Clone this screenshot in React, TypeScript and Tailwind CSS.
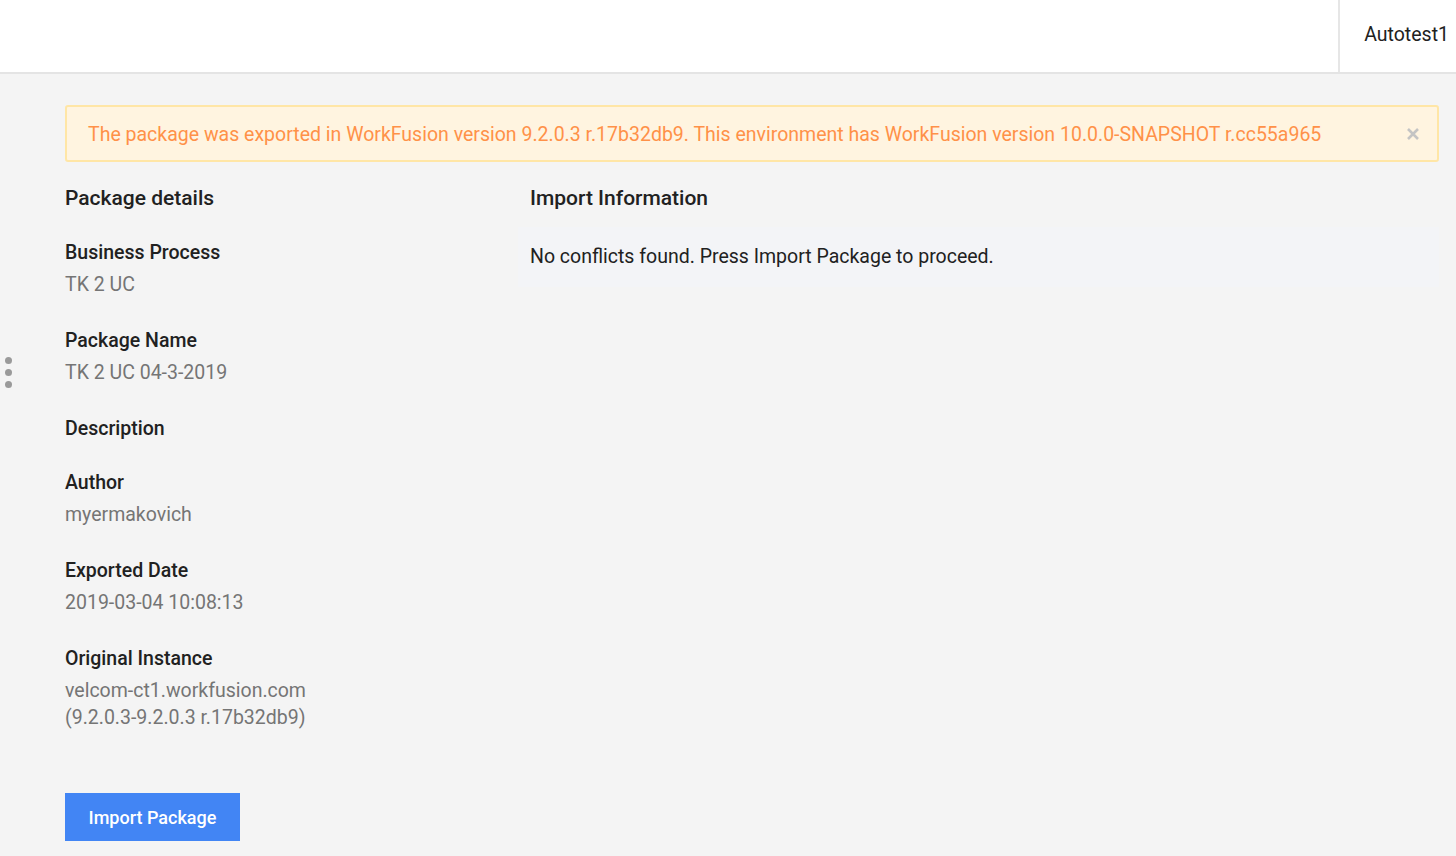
import React from "react";

const font = { fontFamily: "Roboto, 'Noto Sans', sans-serif" };

function Field({ label, value }: { label: string; value?: React.ReactNode }) {
  return (
    <div className={value ? "mb-[29px]" : "mb-[27px]"}>
      <div className="text-[19.5px] leading-[27px] font-medium text-[#212121] mb-[5px]">{label}</div>
      {value && <div className="text-[19.5px] leading-[27px] text-[#757575]">{value}</div>}
    </div>
  );
}

export default function App() {
  return (
    <div className="min-h-[856px] bg-[#f4f4f4] relative" style={font}>
      <header className="h-[74px] bg-white border-b-2 border-[#e4e4e4] flex justify-end">
        <div className="border-l-2 border-[#e6e6e6] h-full flex items-center pl-[24px] pr-[7px] pb-[2px] text-[19.5px] text-[#212121]">
          Autotest1
        </div>
      </header>

      <div className="absolute left-[5px] top-[357px] flex flex-col gap-[5px]">
        <span className="w-[7px] h-[7px] rounded-full bg-[#9a9a9a]" />
        <span className="w-[7px] h-[7px] rounded-full bg-[#9a9a9a]" />
        <span className="w-[7px] h-[7px] rounded-full bg-[#9a9a9a]" />
      </div>

      <main className="pl-[65px] pr-[17px] pt-[31px]">
        <div className="h-[57px] bg-[#fff4e0] border-2 border-[#ffe6a6] rounded-[3px] flex items-center justify-between pl-[21px] pr-[16px]">
          <span className="text-[19.5px] text-[#ff9148] pt-[2px]">
            The package was exported in WorkFusion version 9.2.0.3 r.17b32db9. This environment has WorkFusion version 10.0.0-SNAPSHOT r.cc55a965
          </span>
          <svg width="14" height="14" viewBox="0 0 14 14" className="mr-[1px]">
            <path d="M2 2L12 12M12 2L2 12" stroke="#c4c4c4" strokeWidth="2.6" strokeLinecap="butt" />
          </svg>
        </div>

        <div className="flex mt-[23px]">
          <section className="w-[453px] shrink-0">
            <h2 className="text-[21px] leading-[27px] font-medium text-[#212121] mb-[27px]">Package details</h2>
            <Field label="Business Process" value="TK 2 UC" />
            <Field label="Package Name" value="TK 2 UC 04-3-2019" />
            <Field label="Description" />
            <Field label="Author" value="myermakovich" />
            <Field label="Exported Date" value="2019-03-04 10:08:13" />
            <Field
              label="Original Instance"
              value={
                <>
                  velcom-ct1.workfusion.com
                  <br />
                  (9.2.0.3-9.2.0.3 r.17b32db9)
                </>
              }
            />
            <button className="mt-[33px] w-[175px] h-[48px] bg-[#4285f4] text-white text-[18px] font-medium">
              Import Package
            </button>
          </section>

          <section className="flex-1">
            <h2 className="text-[21px] leading-[27px] font-medium text-[#212121] pl-[12px] mb-[15px]">Import Information</h2>
            <div className="h-[60px] bg-[#f3f4f7] flex items-center pl-[12px] text-[19.5px] text-[#212121]">
              No conflicts found. Press Import Package to proceed.
            </div>
          </section>
        </div>
      </main>
    </div>
  );
}
